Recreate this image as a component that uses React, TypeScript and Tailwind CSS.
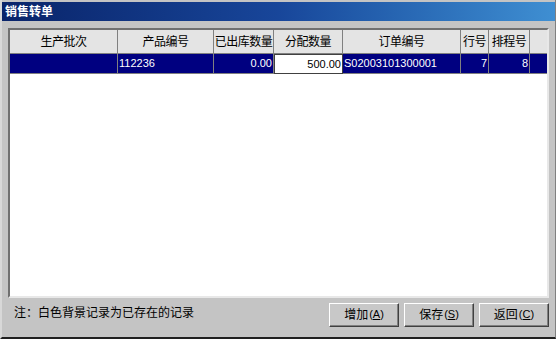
import React from "react";

const cols = [
  { label: "生产批次", w: "w-[108px]" },
  { label: "产品编号", w: "w-[96px]" },
  { label: "已出库数量", w: "w-[60px]" },
  { label: "分配数量", w: "w-[69px]" },
  { label: "订单编号", w: "w-[118px]" },
  { label: "行号", w: "w-[28px]" },
  { label: "排程号", w: "w-[41px]" },
];

const row = [
  { text: "", right: false },
  { text: "112236", right: false },
  { text: "0.00", right: true },
  { text: "500.00", right: true, edit: true },
  { text: "S02003101300001", right: false },
  { text: "7", right: true },
  { text: "8", right: true },
];

function Btn({ label, hot }: { label: string; hot: string }) {
  return (
    <button className="w-[70px] h-[24px] bg-[#c8c8c8] border border-t-white border-l-white border-r-[#404040] border-b-[#404040] shadow-[inset_-1px_-1px_0_#808080] text-[12px] text-black flex items-center justify-center">
      {label}
      <span className="text-[11px] ml-[1px]">(<u>{hot}</u>)</span>
    </button>
  );
}

export default function App() {
  return (
    <div
      className="w-[556px] h-[339px] bg-[#c4c4c4] flex flex-col border-l-2 border-[#d8d8d8] border-b-2 border-b-[#202020] border-r border-r-[#808080]"
      style={{ fontFamily: '"Liberation Sans", "Noto Sans CJK SC", sans-serif' }}
    >
      <div className="mt-[2px] h-[19px] bg-gradient-to-r from-[#0a246a] via-[#18469a] to-[#3f8fd2] text-white font-bold text-[12px] flex items-center pl-[3px]">
        销售转单
      </div>
      <div className="flex-1 flex flex-col px-[6px] pt-[7px]">
        <div className="h-[270px] bg-white border-2 border-t-[#707070] border-l-[#707070] border-r-[#e8e8e8] border-b-[#e8e8e8] flex flex-col">
          <div className="flex h-[24px] bg-[#e4e4e4]">
            {cols.map((c) => (
              <div
                key={c.label}
                className={`${c.w} shrink-0 border-r border-b border-[#808080] flex items-center justify-center text-[12px] text-black whitespace-nowrap overflow-hidden tracking-[-0.5px]`}
              >
                {c.label}
              </div>
            ))}
            <div className="flex-1 border-b border-[#808080]" />
          </div>
          <div className="flex h-[20px] bg-[#000080]">
            {row.map((c, i) => (
              <div
                key={i}
                className={`${cols[i].w} shrink-0 flex items-center px-[1px] text-[11px] ${
                  c.edit
                    ? "bg-white text-black border border-[#404040]"
                    : "text-white border-r border-b border-[#808080]"
                } ${c.right ? "justify-end" : "justify-start"}`}
              >
                {c.text}
              </div>
            ))}
            <div className="flex-1 border-b border-[#808080]" />
          </div>
        </div>
        <div className="flex-1 flex items-center justify-between pb-[6px]">
          <div className="text-[12px] text-black pl-[6px] -mt-[4px]">注：白色背景记录为已存在的记录</div>
          <div className="flex gap-[5px]">
            <Btn label="增加" hot="A" />
            <Btn label="保存" hot="S" />
            <Btn label="返回" hot="C" />
          </div>
        </div>
      </div>
    </div>
  );
}
